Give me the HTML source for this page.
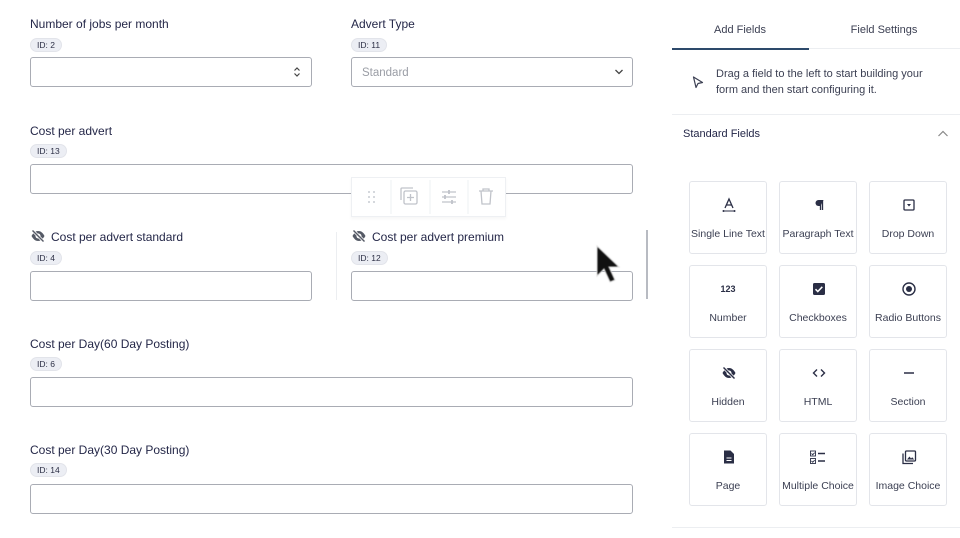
<!DOCTYPE html><html><head><style>
body{margin:0;width:960px;height:538px;background:#fff;font-family:"Liberation Sans",sans-serif;position:relative;overflow:hidden;color:#23282d}
.a{position:absolute}
.lbl{font-size:12px;color:#242748;line-height:14px}
.bd{font-size:8.5px;background:#eceef4;color:#2c2f45;border-radius:8px;padding:0 6px;height:12px;line-height:12px;border:1px solid #e2e4ea}
.in{border:1px solid #a9acb4;border-radius:3px;box-sizing:border-box;height:30px}
.card{width:78px;height:73px;border:1px solid #e3e5ea;border-radius:3px;box-sizing:border-box;text-align:center}
.card .t{position:absolute;top:46px;left:0;right:0;font-size:10.5px;color:#3b3f52}
.card svg{position:absolute;top:15px;left:31px}
</style></head><body>
<div class="a lbl" style="left:30px;top:17px">Number of jobs per month</div>
<div class="a bd" style="left:30px;top:38px">ID: 2</div>
<div class="a in" style="left:30px;top:57px;width:282px"><svg class="a" style="left:262px;top:8px" width="8" height="12"><path d="M1.5 4.5L4 2l2.5 2.5M1.5 7.5L4 10l2.5-2.5" stroke="#444" fill="none" stroke-width="1.2"/></svg></div>
<div class="a lbl" style="left:351px;top:17px">Advert Type</div>
<div class="a bd" style="left:351px;top:38px">ID: 11</div>
<div class="a in" style="left:351px;top:57px;width:282px"><span class="a" style="left:10px;top:9px;font-size:11.5px;color:#9a9da5">Standard</span><svg class="a" style="left:262px;top:10px" width="10" height="8"><path d="M1.5 2L5 5.5 8.5 2" stroke="#444" fill="none" stroke-width="1.3"/></svg></div>

<div class="a lbl" style="left:30px;top:124px">Cost per advert</div>
<div class="a bd" style="left:30px;top:144px">ID: 13</div>
<div class="a in" style="left:30px;top:164px;width:603px"></div>

<div class="a" style="left:351px;top:177px;width:153px;height:38px;background:#fff;border:1px solid #eef0f3;box-shadow:0 2px 3px rgba(0,0,0,.04)">
<svg width="153" height="38"><g fill="#c8cbd2"><circle cx="17" cy="14" r="1"/><circle cx="22" cy="14" r="1"/><circle cx="17" cy="19" r="1"/><circle cx="22" cy="19" r="1"/><circle cx="17" cy="24" r="1"/><circle cx="22" cy="24" r="1"/></g>
<g stroke="#c0c3ca" fill="none" stroke-width="1.3"><rect x="52" y="13" width="13" height="13" rx="1.5"/><path d="M49 22V11a1 1 0 011-1h11M58.5 16v7M55 19.5h7"/>
<path d="M90 14h14M90 19h14M90 24h14"/><path d="M97 12v4M93 17v4M100 22v4" stroke-width="1.8"/>
<path d="M127 13h14M131 13v-2h6v2M129 13l1 13h8l1-13"/></g>
<g stroke="#eef0f3"><path d="M39 2v34M78 2v34M116 2v34"/></g></svg></div>

<svg class="a" style="left:30px;top:229px" width="16" height="14"><path d="M1.5 7C3.5 3.5 5.5 2 8 2s4.5 1.5 6.5 5c-2 3.5-4 5-6.5 5S3.5 10.5 1.5 7z" fill="#555a66"/><circle cx="8" cy="7" r="2.5" fill="#fff"/><path d="M2.5 1.5l11 11" stroke="#fff" stroke-width="3"/><path d="M2.5 1.5l11 11" stroke="#555a66" stroke-width="1.4"/></svg>
<div class="a lbl" style="left:51px;top:230px">Cost per advert standard</div>
<div class="a bd" style="left:30px;top:251px">ID: 4</div>
<div class="a in" style="left:30px;top:271px;width:282px"></div>
<div class="a" style="left:336px;top:232px;width:1px;height:68px;background:#eceef1"></div>
<svg class="a" style="left:351px;top:229px" width="16" height="14"><path d="M1.5 7C3.5 3.5 5.5 2 8 2s4.5 1.5 6.5 5c-2 3.5-4 5-6.5 5S3.5 10.5 1.5 7z" fill="#555a66"/><circle cx="8" cy="7" r="2.5" fill="#fff"/><path d="M2.5 1.5l11 11" stroke="#fff" stroke-width="3"/><path d="M2.5 1.5l11 11" stroke="#555a66" stroke-width="1.4"/></svg>
<div class="a lbl" style="left:372px;top:230px">Cost per advert premium</div>
<div class="a bd" style="left:351px;top:251px">ID: 12</div>
<div class="a in" style="left:351px;top:271px;width:282px"></div>
<div class="a" style="left:646px;top:230px;width:2px;height:69px;background:#b8bbc2"></div>
<svg class="a" style="left:592px;top:243px" width="32" height="44"><path d="M5 3v30l7-7 6 13 5-2-6-13h10z" fill="#111" stroke="#ddd" stroke-width="1" style="filter:blur(.6px)"/></svg>

<div class="a lbl" style="left:30px;top:337px">Cost per Day(60 Day Posting)</div>
<div class="a bd" style="left:30px;top:357px">ID: 6</div>
<div class="a in" style="left:30px;top:377px;width:603px"></div>
<div class="a lbl" style="left:30px;top:443px">Cost per Day(30 Day Posting)</div>
<div class="a bd" style="left:30px;top:463px">ID: 14</div>
<div class="a in" style="left:30px;top:484px;width:603px"></div>

<div class="a" style="left:671px;top:0;width:289px;height:538px;background:#fff"></div>
<div class="a" style="left:672px;top:24px;width:136px;text-align:center;font-size:11px;color:#3b3f52">Add Fields</div>
<div class="a" style="left:808px;top:24px;width:152px;text-align:center;font-size:11px;color:#3b3f52">Field Settings</div>
<div class="a" style="left:672px;top:48px;width:288px;height:1px;background:#eceef1"></div>
<div class="a" style="left:672px;top:48px;width:137px;height:2px;background:#2d4a6b"></div>
<svg class="a" style="left:691px;top:75px" width="14" height="14"><path d="M2.5 2l9 5.5-4.5 1-2 4z" fill="none" stroke="#3b3f52" stroke-width="1.2" stroke-linejoin="round"/></svg>
<div class="a" style="left:716px;top:67px;font-size:11px;line-height:15.5px;color:#3b3f52">Drag a field to the left to start building your<br>form and then start configuring it.</div>
<div class="a" style="left:672px;top:114px;width:288px;height:1px;background:#eceef1"></div>
<div class="a" style="left:683px;top:128px;font-size:11px;color:#242748">Standard Fields</div>
<svg class="a" style="left:937px;top:130px" width="12" height="8"><path d="M1.5 6L6 1.5 10.5 6" stroke="#888" fill="none" stroke-width="1.2"/></svg>
<div class="a" style="left:672px;top:527px;width:288px;height:1px;background:#eceef1"></div>

<div class="a card" style="left:689px;top:181px"><svg width="16" height="16"><path d="M4 11L8 2l4 9M5.5 8h5" stroke="#2a2e45" fill="none" stroke-width="1.3"/><path d="M2 14h12" stroke="#2a2e45" stroke-width="1"/><circle cx="2.5" cy="14" r="1" fill="#2a2e45"/><circle cx="13.5" cy="14" r="1" fill="#2a2e45"/></svg><div class="t">Single Line Text</div></div>
<div class="a card" style="left:779px;top:181px"><svg width="16" height="16"><path d="M9.5 3v10M11.5 3v10" stroke="#2a2e45" stroke-width="1.3"/><path d="M12.5 3H7.5a3 3 0 000 6h2z" fill="#2a2e45"/></svg><div class="t">Paragraph Text</div></div>
<div class="a card" style="left:869px;top:181px"><svg width="16" height="16"><rect x="3" y="3" width="10" height="10" rx="1" stroke="#2a2e45" fill="none" stroke-width="1.3"/><path d="M6 7h4L8 9.5z" fill="#2a2e45"/></svg><div class="t">Drop Down</div></div>

<div class="a card" style="left:689px;top:265px"><div class="a" style="top:18px;left:0;right:0;font-size:9px;font-weight:bold;color:#2a2e45">123</div><div class="t">Number</div></div>
<div class="a card" style="left:779px;top:265px"><svg width="16" height="16"><rect x="2" y="2" width="12" height="12" rx="1.5" fill="#2a2e45"/><path d="M4.5 8.2l2.3 2.3 4.5-4.7" stroke="#fff" fill="none" stroke-width="1.5"/></svg><div class="t">Checkboxes</div></div>
<div class="a card" style="left:869px;top:265px"><svg width="16" height="16"><circle cx="8" cy="8" r="6" stroke="#2a2e45" fill="none" stroke-width="1.4"/><circle cx="8" cy="8" r="3" fill="#2a2e45"/></svg><div class="t">Radio Buttons</div></div>

<div class="a card" style="left:689px;top:349px"><svg width="16" height="16"><path d="M1.5 8C3.5 4.5 5.5 3 8 3s4.5 1.5 6.5 5c-2 3.5-4 5-6.5 5S3.5 11.5 1.5 8z" fill="#2a2e45"/><circle cx="8" cy="8" r="2.5" fill="#fff"/><path d="M2.5 2.5l11 11" stroke="#fff" stroke-width="3"/><path d="M2.5 2.5l11 11" stroke="#2a2e45" stroke-width="1.4"/></svg><div class="t">Hidden</div></div>
<div class="a card" style="left:779px;top:349px"><svg width="16" height="16"><path d="M6 4.5L2.5 8 6 11.5M10 4.5L13.5 8 10 11.5" stroke="#2a2e45" fill="none" stroke-width="1.4"/></svg><div class="t">HTML</div></div>
<div class="a card" style="left:869px;top:349px"><svg width="16" height="16"><path d="M3 8h10" stroke="#2a2e45" stroke-width="1.5"/></svg><div class="t">Section</div></div>

<div class="a card" style="left:689px;top:433px"><svg width="16" height="16"><path d="M3 1.5h6.5L13 5v9.5H3z" fill="#2a2e45"/><path d="M5.5 9h5M5.5 11.5h5" stroke="#fff" stroke-width="1.1"/></svg><div class="t">Page</div></div>
<div class="a card" style="left:779px;top:433px"><svg width="20" height="16" style="left:29px"><g stroke="#2a2e45" fill="none" stroke-width=".9"><rect x="1.5" y="2" width="5" height="5"/><rect x="1.5" y="9.5" width="5" height="5"/><path d="M2.5 4.5l1.2 1.2 2-2M2.5 12l1.2 1.2 2-2"/></g><path d="M9 4.5h7M9 12h7" stroke="#2a2e45" stroke-width="1.4"/></svg><div class="t">Multiple Choice</div></div>
<div class="a card" style="left:869px;top:433px"><svg width="16" height="16"><rect x="4.5" y="2" width="10" height="10" rx="1" stroke="#2a2e45" fill="none" stroke-width="1.3"/><path d="M2 4.5v10h10" stroke="#2a2e45" fill="none" stroke-width="1.3"/><path d="M6 10.5l2.5-3 1.5 2 1.2-1.2 2 2.2z" fill="#2a2e45"/></svg><div class="t">Image Choice</div></div>
</body></html>
